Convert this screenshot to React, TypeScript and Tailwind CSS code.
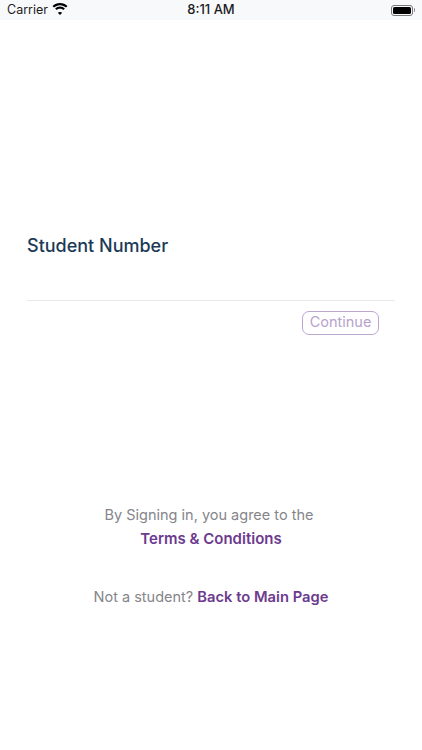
function StatusBar() {
  return (
    <div className="relative flex h-[20px] items-center bg-[#f8f9fb] px-[7px] text-[#1c1c1e]">
      <div className="flex items-center gap-[4px]">
        <span className="text-[12.500px]">Carrier</span>
        <svg width="16" height="12" viewBox="0 0 16 12" className="mb-[2px] text-black">
          <path
            fill="currentColor"
            d="M8 2.200c2.300 0 4.400.9 6 2.400l1.500-1.500C13.500 1.200 10.900 0 8 0S2.500 1.200.5 3.100L2 4.600c1.600-1.500 3.700-2.400 6-2.400zm0 3.500c1.300 0 2.500.5 3.400 1.300l1.500-1.500C11.600 4.300 9.900 3.500 8 3.500s-3.600.8-4.900 2l1.500 1.500C5.500 6.200 6.700 5.700 8 5.700zm0 3.300c-.9 0-1.600.3-2.200.8L8 12l2.200-2.200C9.600 9.300 8.900 9 8 9z"
          />
        </svg>
      </div>
      <span className="absolute left-0 right-0 text-center text-[13px] font-medium">8:11 AM</span>
      <div className="ml-auto flex items-center gap-px">
        <div className="h-[11px] w-[22px] rounded-[3px] border border-[#77777c] p-px">
          <div className="h-full w-full rounded-[1.500px] bg-black" />
        </div>
        <div className="h-[4px] w-px rounded-r-sm bg-[#8e8e93]" />
      </div>
    </div>
  );
}

export default function App() {
  return (
    <div className="flex h-[750px] w-[422px] flex-col overflow-hidden bg-white font-['Inter','Liberation_Sans',sans-serif]">
      <StatusBar />
      <div className="px-[27px] pt-[204px]">
        <h1 className="text-[18px] leading-[44px] font-medium text-[#1c3a57]">Student Number</h1>
        <div className="mt-[32px] h-px bg-[#e8e8ea]" />
        <div className="mt-[10px] flex justify-end pr-[16px]">
          <button className="h-[24px] w-[77px] rounded-[7px] border border-[#bda6d0] pb-px text-[14.500px] leading-none text-[#b8a2cc]">
            Continue
          </button>
        </div>
      </div>
      <div className="mt-[168px] flex flex-col items-center text-[14.500px] text-[#85858a]">
        <p className="pr-[4px] leading-[24px]">By Signing in, you agree to the</p>
        <a className="text-[15px] leading-[24px] font-semibold text-[#6c3a8e]">Terms &amp; Conditions</a>
        <p className="mt-[34px] leading-[24px]">
          Not a student? <a className="text-[14.750px] font-semibold text-[#6c3a8e]">Back to Main Page</a>
        </p>
      </div>
    </div>
  );
}
